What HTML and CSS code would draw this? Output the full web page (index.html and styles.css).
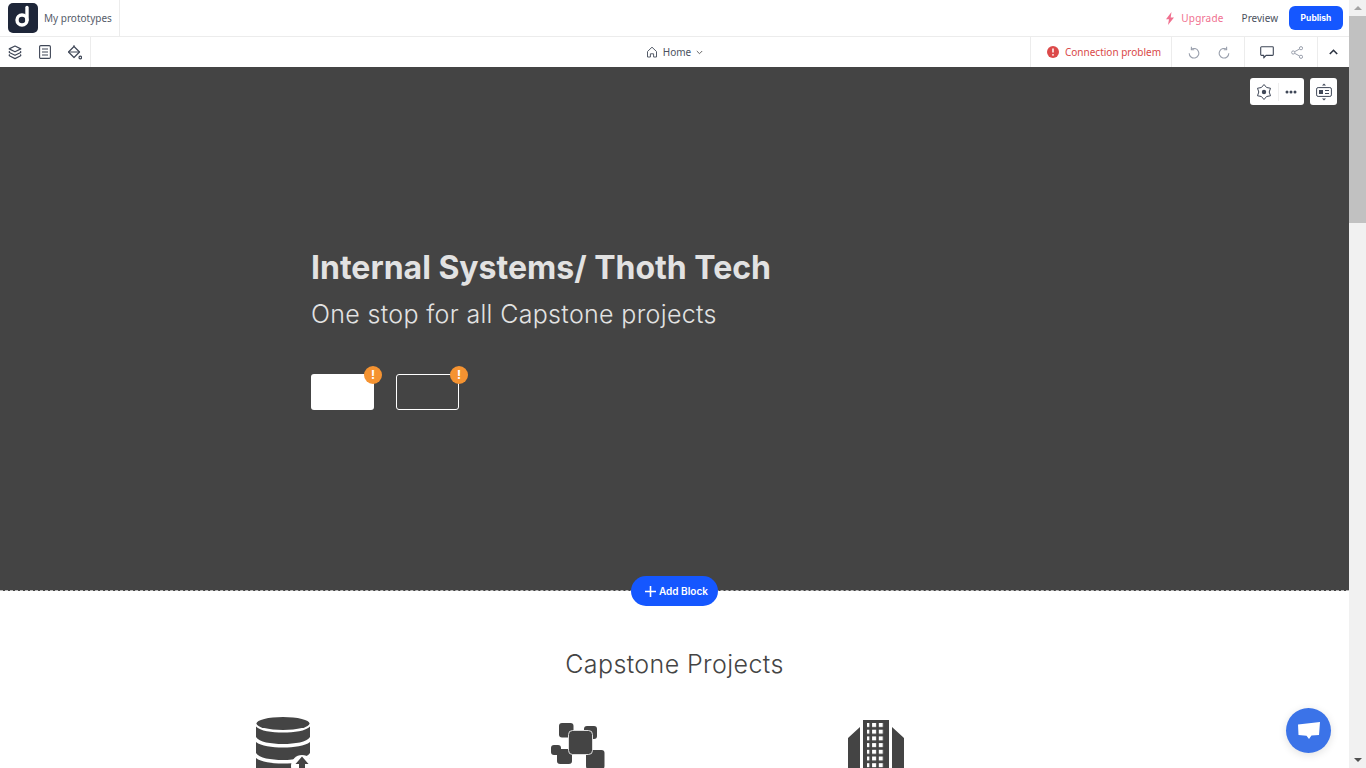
FILE: index.html
```html
<!DOCTYPE html>
<html lang="en">
<head>
    <meta charset="UTF-8">
    <meta name="viewport" content="width=device-width, initial-scale=1.0">
    <title>Internal Systems/ Thoth Tech</title>
    <link rel="stylesheet" href="styles.css">
</head>
<body>
    <div class="page">
        <!-- Top bar -->
        <div class="topbar">
            <div class="brand">
                <svg class="logo" width="30" height="30" viewBox="0 0 30 30">
                    <rect width="30" height="30" rx="5" fill="#1e2639"/>
                    <circle cx="14" cy="17" r="5" fill="none" stroke="#fff" stroke-width="3.4"/>
                    <path d="M19 17V4.500" fill="none" stroke="#fff" stroke-width="3.4" stroke-linecap="round"/>
                </svg>
                <span class="brand-name">My prototypes</span>
            </div>
            <div class="top-actions">
                <span class="upgrade">
                    <svg width="10" height="13" viewBox="0 0 10 13"><path d="M6.500 0 1 7.200h3L3 13l6-7.600H5.700z" fill="#f0708f"/></svg>
                    Upgrade
                </span>
                <span class="preview">Preview</span>
                <button class="publish">Publish</button>
            </div>
        </div>

        <!-- Tool bar -->
        <div class="toolbar">
            <div class="tools-left">
                <svg width="14" height="15" viewBox="0 0 14 15" fill="none" stroke="#3f4757" stroke-width="1.200" stroke-linejoin="round"><path d="M7 1l5.800 2.900L7 6.800 1.200 3.900z"/><path d="M1.800 6.200c-.8.400-.8 1.100 0 1.500L7 10.300l5.200-2.600c.8-.4.800-1.100 0-1.500"/><path d="M1.800 9.500c-.8.400-.8 1.100 0 1.500L7 13.600l5.200-2.600c.8-.4.800-1.100 0-1.500"/></svg>
                <svg width="12" height="14" viewBox="0 0 12 14" fill="none" stroke="#3f4757" stroke-width="1.100"><rect x=".6" y=".6" width="10.800" height="12.800" rx="1.200"/><path d="M3 4h6M3 7h6M3 10h6"/></svg>
                <svg width="14" height="15" viewBox="0 0 14 15" fill="none" stroke="#3f4757" stroke-width="1.200" stroke-linejoin="round"><path d="M6 1.500 11.500 7 6 12.500.5 7z"/><path d="M6 1.500V.3M.5 7h11"/><circle cx="12.300" cy="12.500" r="1.300"/></svg>
            </div>
            <div class="page-select">
                <svg width="12" height="12" viewBox="0 0 12 12" fill="none" stroke="#555c69" stroke-width="1"><path d="M1.500 5.500 6 1.200l4.500 4.300V11H7.600V7.800H4.400V11H1.500z" stroke-linejoin="round"/></svg>
                <span>Home</span>
                <svg width="7" height="5" viewBox="0 0 7 5" fill="none" stroke="#666" stroke-width="1"><path d="M.8 1l2.700 2.700L6.200 1"/></svg>
            </div>
            <div class="tools-right">
                <div class="tool-group status">
                    <svg width="12" height="12" viewBox="0 0 12 12"><circle cx="6" cy="6" r="6" fill="#dc4a4a"/><path d="M6 2.600v4" stroke="#fff" stroke-width="1.500"/><circle cx="6" cy="8.800" r=".9" fill="#fff"/></svg>
                    <span>Connection problem</span>
                </div>
                <div class="tool-group history">
                    <svg width="12" height="13" viewBox="0 0 12 13" fill="none" stroke="#9aa0ad" stroke-width="1.100"><path d="M3 3.500a4.800 4.800 0 1 1-1.800 3.700"/><path d="M3.400 .8v3H6.300"/></svg>
                    <svg width="12" height="13" viewBox="0 0 12 13" fill="none" stroke="#9aa0ad" stroke-width="1.100"><path d="M9 3.500a4.800 4.800 0 1 0 1.800 3.700"/><path d="M8.600 .8v3H5.700"/></svg>
                </div>
                <div class="tool-group social">
                    <svg width="14" height="13" viewBox="0 0 14 13" fill="none" stroke="#3f4757" stroke-width="1.100" stroke-linejoin="round"><path d="M1.500.8h11c.4 0 .8.400.8.800v7c0 .4-.4.800-.8.800H6L3.800 12V9.400H1.500c-.4 0-.8-.4-.8-.8v-7c0-.4.400-.8.800-.8z"/></svg>
                    <svg width="12" height="13" viewBox="0 0 12 13" fill="none" stroke="#9aa0ad" stroke-width="1"><circle cx="2.200" cy="6.500" r="1.600"/><circle cx="10" cy="2.200" r="1.600"/><circle cx="10" cy="10.800" r="1.600"/><path d="M3.600 5.700l5-2.700M3.600 7.300l5 2.700"/></svg>
                </div>
                <div class="collapse">
                    <svg width="9" height="6" viewBox="0 0 9 6" fill="none" stroke="#2d3442" stroke-width="1.600"><path d="M.8 5l3.700-3.700L8.200 5"/></svg>
                </div>
            </div>
        </div>

        <!-- Hero block -->
        <section class="hero">
            <h1>Internal Systems/ Thoth Tech</h1>
            <p class="hero-sub">One stop for all Capstone projects</p>
            <div class="hero-buttons">
                <div class="hero-btn solid"><span class="warn">!</span></div>
                <div class="hero-btn outline"><span class="warn">!</span></div>
            </div>

            <div class="block-tools">
                <div class="tool-card wide">
                    <svg width="16" height="16" viewBox="0 0 16 16" fill="none" stroke="#3f4757" stroke-width="1" stroke-linejoin="round"><path d="M8 .5l2.600 3 3.900.75L13.200 8l1.300 3.750-3.900.75L8 15.500l-2.600-3-3.900-.75L2.800 8 1.500 4.250l3.900-.75z"/><circle cx="8" cy="8" r="2.200" fill="#3f4757" stroke="none"/></svg>
                    <i class="card-sep"></i>
                    <svg width="12" height="4" viewBox="0 0 12 4" fill="#3f4757"><circle cx="2" cy="2" r="1.500"/><circle cx="6" cy="2" r="1.500"/><circle cx="10" cy="2" r="1.500"/></svg>
                </div>
                <div class="tool-card">
                    <svg width="16" height="18" viewBox="0 0 16 18" fill="none" stroke="#3f4757"><path d="M8 .6 6 2.600h4z" fill="#3f4757" stroke="none"/><path d="M8 17.400l-2-2h4z" fill="#3f4757" stroke="none"/><rect x=".6" y="4.600" width="14.800" height="8.800" rx="1.500"/><rect x="3" y="7" width="4" height="4" fill="#3f4757" stroke="none"/><path d="M9 7.500h4M9 10.500h4"/></svg>
                </div>
            </div>

            <button class="add-block">
                <svg width="11" height="11" viewBox="0 0 11 11" stroke="#fff" stroke-width="1.600"><path d="M5.500 0v11M0 5.500h11"/></svg>
                Add Block
            </button>
        </section>

        <!-- Projects block -->
        <section class="projects">
            <h2>Capstone Projects</h2>
            <div class="project-icons">
                <svg class="icon-db" width="56" height="51" viewBox="0 0 56 51">
                    <ellipse cx="28" cy="6.500" rx="26.500" ry="6.500" fill="#444"/>
                    <path d="M1 9.500C5 14 17 15.500 28 15.500S51 14 55 9.500V20c-3 5-15 7-27 7S4 25 1 20z" fill="#444"/>
                    <path d="M1 25c5 4 16 5.500 27 5.500S50 29 55 25v11c-3 5-15 7-27 7S4 41 1 36z" fill="#444"/>
                    <path d="M1 41c5 4 16 5.500 27 5.500S50 45 55 41v10H1z" fill="#444"/>
                    <circle cx="47" cy="49" r="11" fill="#fff"/>
                    <path d="M47 39.500l6.500 7.500H50v4h-6v-4h-3.500z" fill="#444"/>
                </svg>
                <svg class="icon-blocks" width="55" height="46" viewBox="0 0 55 46">
                    <rect x="9" y="0" width="14.500" height="14.500" rx="3" fill="#444"/>
                    <rect x="34" y="3" width="13" height="13" rx="3" fill="#444"/>
                    <rect x="1" y="22" width="10" height="10" rx="3" fill="#444"/>
                    <rect x="7" y="26" width="15" height="15" rx="3" fill="#444"/>
                    <rect x="36" y="27" width="18.500" height="19" rx="3" fill="#444"/>
                    <rect x="18.500" y="7.500" width="24" height="24" rx="4" fill="#444" stroke="#ddd" stroke-width="1"/>
                </svg>
                <svg class="icon-building" width="56" height="48" viewBox="0 0 56 48">
                    <defs>
                        <pattern id="windows" x="4" y="3" width="6.700" height="6.700" patternUnits="userSpaceOnUse">
                            <rect width="4" height="4" fill="#fff"/>
                        </pattern>
                    </defs>
                    <path d="M0 18 12 7v41H0zM56 18 44 7v41h12z" fill="#444"/>
                    <rect x="15" y="0" width="26" height="48" fill="#444"/>
                    <rect x="19" y="3" width="18" height="45" fill="url(#windows)"/>
                </svg>
            </div>
        </section>

        <div class="chat">
            <svg width="24" height="20" viewBox="0 0 24 20"><path d="M1 3.500 23 1l-1 13-7.500.6L12 18l-2.500-3.300L1.500 14z" fill="#fff"/></svg>
        </div>
    </div>

    <!-- Scrollbar -->
    <div class="scrollbar">
        <span class="arrow-up"></span>
        <span class="thumb"></span>
        <span class="arrow-down"></span>
    </div>
</body>
</html>
```

FILE: styles.css
```css
body {
    font-family: 'Noto Sans', 'Inter', sans-serif;
    margin: 0;
    height: 100vh;
    display: flex;
    overflow: hidden;
    background: #fff;
    color: #444;
}
svg {
    display: block;
    flex: none;
}
.page {
    position: relative;
    flex: 1;
    min-width: 0;
    overflow: hidden;
}

/* top bar */
.topbar {
    display: flex;
    justify-content: space-between;
    height: 36px;
    border-bottom: 1px solid #ececec;
}
.brand {
    display: flex;
    align-items: center;
    width: 120px;
    padding-left: 8px;
    box-sizing: border-box;
    border-right: 1px solid #ececec;
}
.brand-name {
    margin-left: 6px;
    font-size: 10px;
    color: #555c69;
    white-space: nowrap;
}
.top-actions {
    display: flex;
    align-items: center;
    padding-right: 6px;
    font-size: 10px;
}
.upgrade {
    display: flex;
    align-items: center;
    gap: 6px;
    letter-spacing: 0.2px;
    color: #f0708f;
}
.preview {
    margin-left: 18px;
    color: #4b5260;
}
.publish {
    margin-left: 11px;
    width: 54px;
    height: 24px;
    border: none;
    border-radius: 6px;
    background: #1557ff;
    color: #fff;
    font: 700 8.500px 'Inter', sans-serif;
}

/* tool bar */
.toolbar {
    display: grid;
    grid-template-columns: 1fr auto 1fr;
    align-items: stretch;
    height: 30px;
    font-size: 10px;
}
.tools-left {
    justify-self: start;
    display: flex;
    align-items: center;
    gap: 17px;
    width: 91px;
    padding-left: 8px;
    box-sizing: border-box;
    border-right: 1px solid #ececec;
}
.page-select {
    display: flex;
    align-items: center;
    gap: 5px;
    color: #4b5260;
}
.tools-right {
    justify-self: end;
    display: flex;
}
.tool-group {
    display: flex;
    align-items: center;
    box-sizing: border-box;
    border-left: 1px solid #ececec;
}
.status {
    width: 141px;
    padding-left: 16px;
    gap: 6px;
    color: #d94848;
}
.history {
    width: 73px;
    padding-left: 16px;
    gap: 18px;
}
.social {
    width: 73px;
    padding-left: 15px;
    gap: 17px;
}
.collapse {
    display: flex;
    align-items: center;
    justify-content: center;
    width: 31px;
    border-left: 1px solid #ececec;
}

/* hero */
.hero {
    position: relative;
    height: 524px;
    padding: 182px 0 0 311px;
    box-sizing: border-box;
    background: #444;
    border-bottom: 1px dashed #bbb;
}
.hero h1 {
    margin: 0;
    font: 700 32px/38px 'Inter', sans-serif;
    color: #e2e2e2;
}
.hero-sub {
    margin: 11px 0 0;
    font: 300 25px/32px 'Inter', sans-serif;
    letter-spacing: 0.33px;
    color: #e2e2e2;
}
.hero-buttons {
    display: flex;
    gap: 22px;
    margin-top: 44px;
}
.hero-btn {
    position: relative;
    width: 63px;
    height: 36px;
    box-sizing: border-box;
    border-radius: 3px;
}
.hero-btn.solid {
    background: #fff;
}
.hero-btn.outline {
    border: 1px solid #fff;
}
.warn {
    position: absolute;
    top: -8px;
    right: -8px;
    width: 18px;
    height: 18px;
    border-radius: 50%;
    background: #f59331;
    color: #fff;
    font: 700 12px/18px 'Inter', sans-serif;
    text-align: center;
}
.hero-btn.outline .warn {
    top: -9px;
    right: -10px;
}
.block-tools {
    position: absolute;
    top: 11px;
    right: 12px;
    display: flex;
    gap: 6px;
}
.tool-card {
    display: flex;
    align-items: center;
    justify-content: center;
    width: 27px;
    height: 27px;
    background: #fff;
    border-radius: 3px;
}
.tool-card.wide {
    width: 54px;
    gap: 6px;
    padding-right: 2px;
    box-sizing: border-box;
}
.card-sep {
    width: 1px;
    height: 18px;
    background: #eee;
}
.add-block {
    position: absolute;
    left: 631px;
    bottom: -16px;
    display: flex;
    align-items: center;
    gap: 3px;
    width: 87px;
    height: 30px;
    padding: 0 0 0 14px;
    border: none;
    border-radius: 15px;
    background: #1557ff;
    color: #fff;
    font: 600 10px 'Inter', sans-serif;
}

/* projects */
.projects {
    text-align: center;
}
.projects h2 {
    margin: 0;
    padding-top: 57px;
    font: 300 25px/32px 'Inter', sans-serif;
    letter-spacing: 0.4px;
    color: #444;
}
.project-icons {
    display: flex;
    padding-left: 255px;
    margin-top: 37px;
}
.icon-blocks {
    margin: 6px 0 0 239px;
}
.icon-building {
    margin: 3px 0 0 243px;
}

/* chat bubble */
.chat {
    position: absolute;
    left: 1286px;
    top: 708px;
    display: flex;
    align-items: center;
    justify-content: center;
    width: 45px;
    height: 45px;
    border-radius: 50%;
    background: #3b73e8;
    box-shadow: 0 2px 8px rgba(0, 0, 0, 0.12);
}

/* scrollbar */
.scrollbar {
    display: flex;
    flex-direction: column;
    align-items: center;
    width: 17px;
    background: #f1f1f1;
}
.arrow-up {
    margin: 6px 0 6px;
    border: 4px solid transparent;
    border-top: none;
    border-bottom: 4px solid #a3a3a3;
}
.thumb {
    width: 100%;
    height: 207px;
    background: #c1c1c1;
}
.arrow-down {
    margin: auto 0 6px;
    border: 4px solid transparent;
    border-bottom: none;
    border-top: 4px solid #505050;
}
```
